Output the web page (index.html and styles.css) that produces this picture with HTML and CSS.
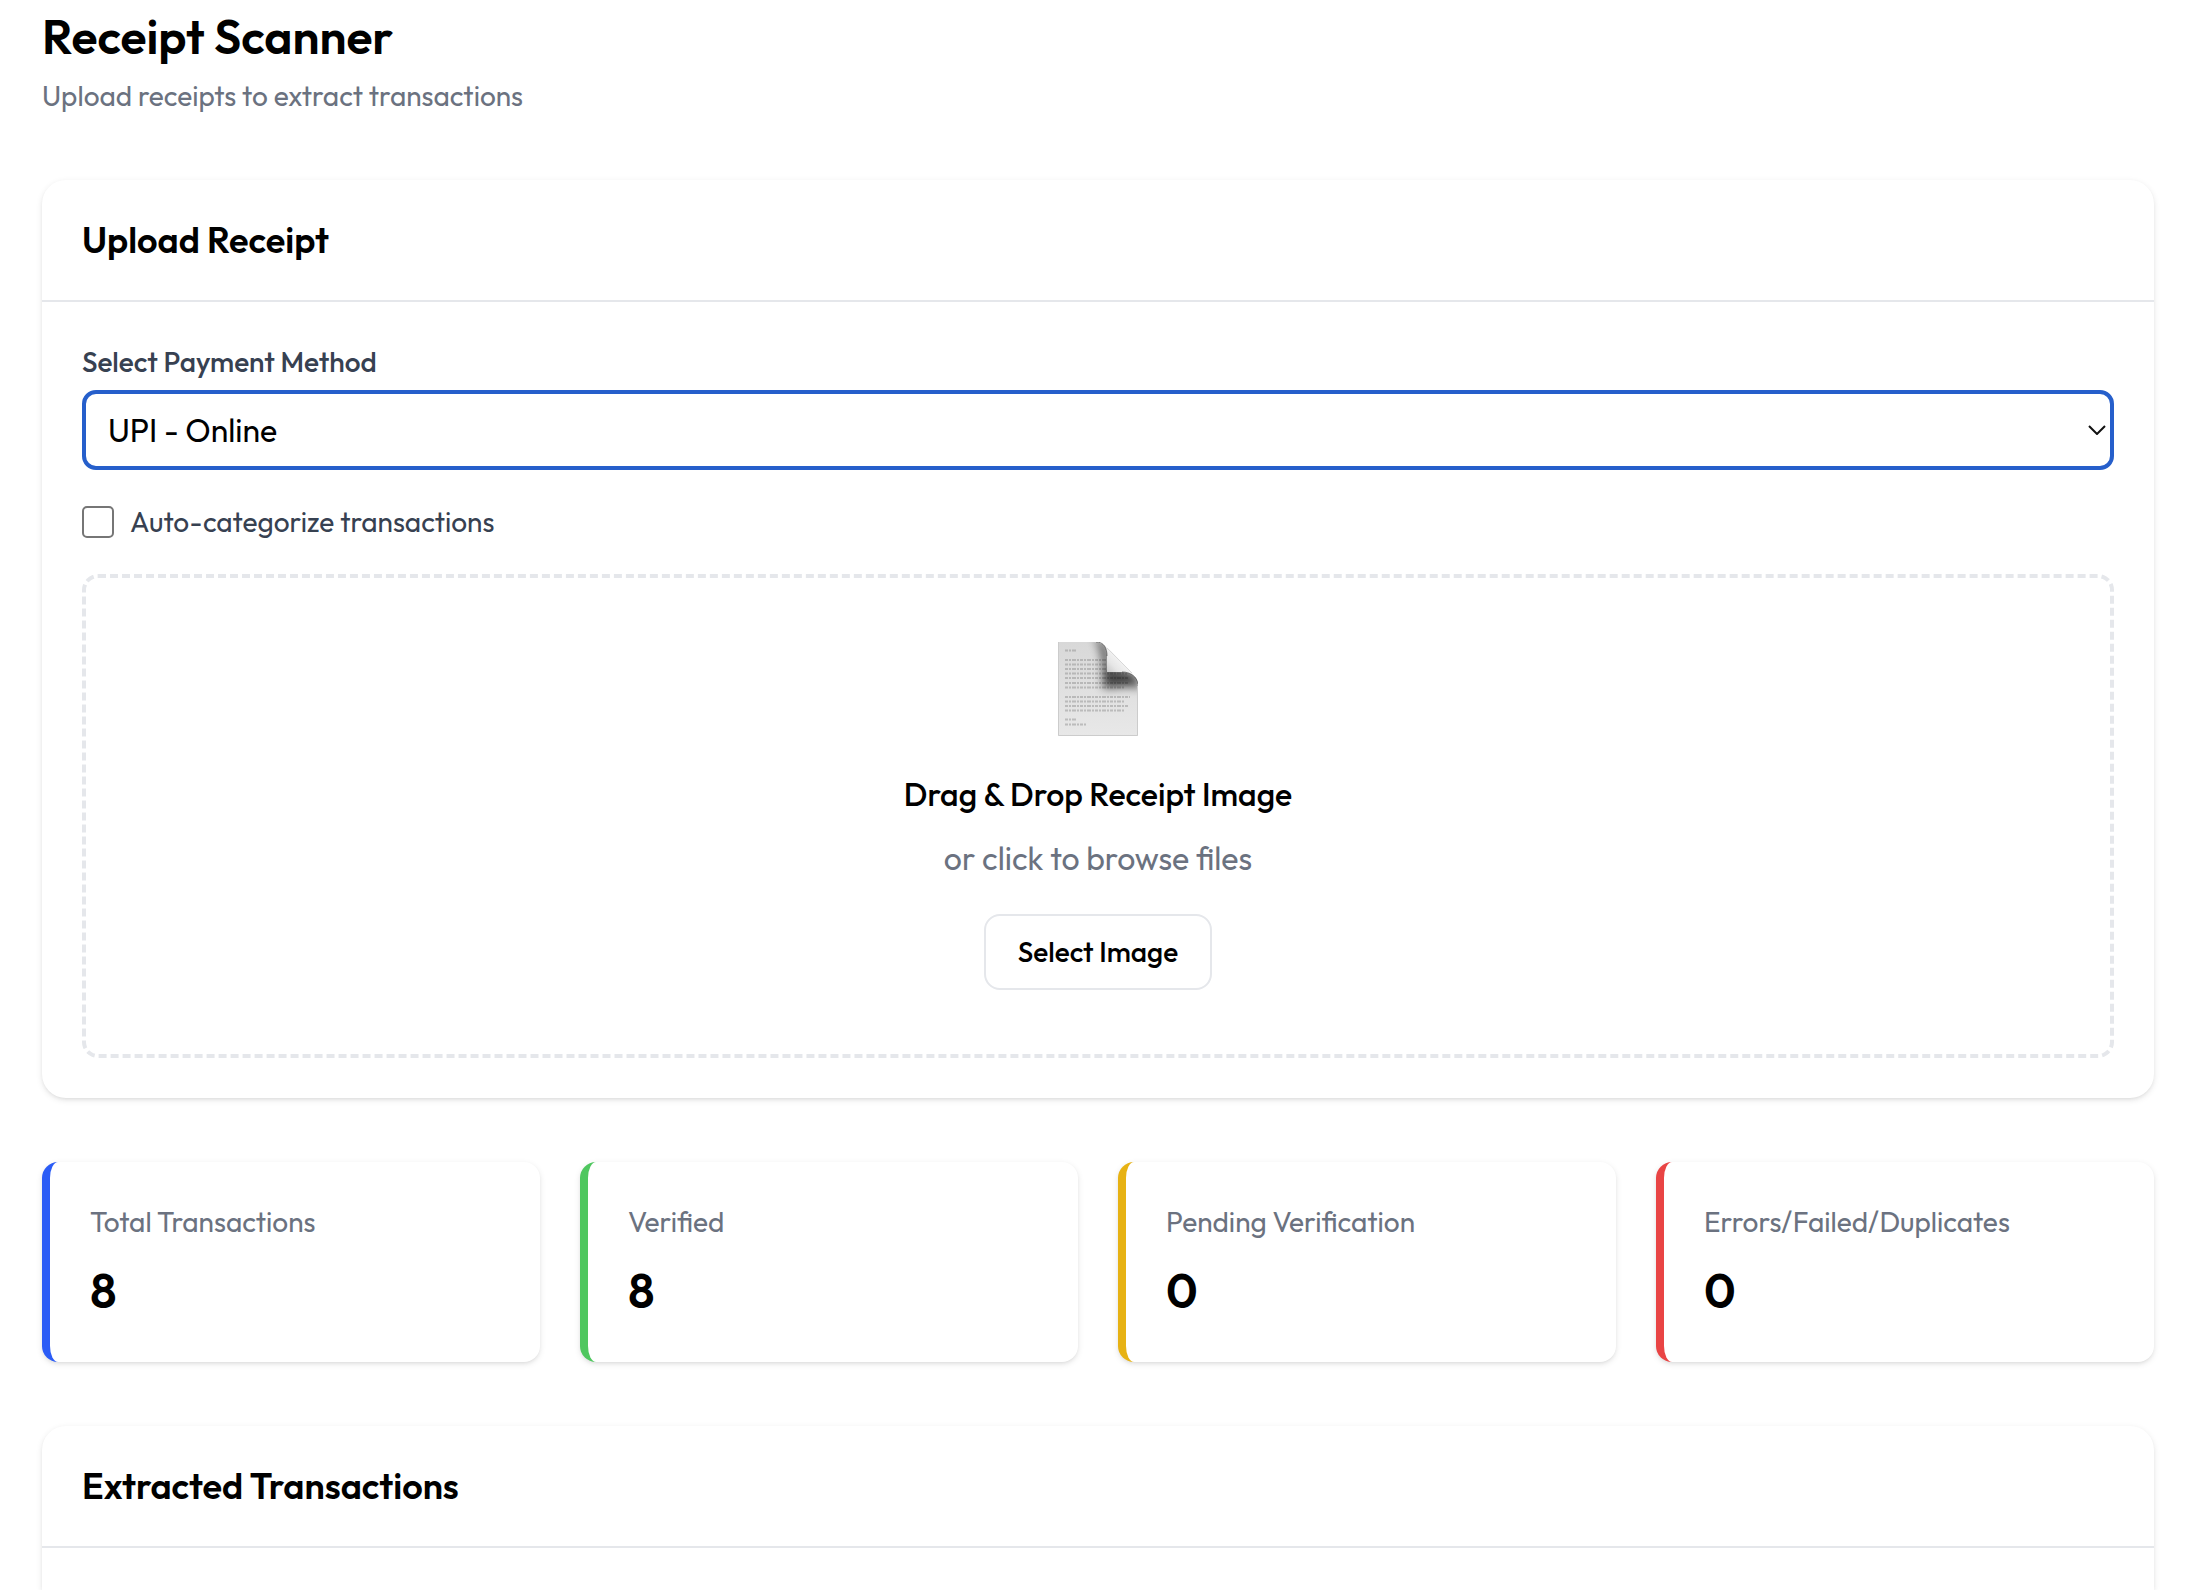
FILE: index.html
```html
<!DOCTYPE html>
<html lang="en">
<head>
<meta charset="utf-8">
<meta name="viewport" content="width=device-width, initial-scale=1">
<title>Receipt Scanner</title>
<link rel="stylesheet" href="styles.css">
</head>
<body>
<main class="page">
  <header class="page-header">
    <h1 class="page-title">Receipt Scanner</h1>
    <p class="page-subtitle">Upload receipts to extract transactions</p>
  </header>

  <section class="card">
    <div class="card-header"><h2 class="card-title">Upload Receipt</h2></div>
    <div class="card-body">
      <label class="field-label" for="method">Select Payment Method</label>
      <div class="select-wrap">
        <select class="select" id="method">
          <option>UPI - Online</option>
        </select>
        <svg class="chevron" viewBox="0 0 18 10" aria-hidden="true"><path d="M1 1l8 8 8-8" fill="none" stroke="#111" stroke-width="2"/></svg>
      </div>
      <div class="check-row">
        <input class="checkbox" type="checkbox" id="auto">
        <label class="check-label" for="auto">Auto-categorize transactions</label>
      </div>
      <div class="dropzone">
        <svg class="doc-icon" viewBox="0 0 80 96" aria-hidden="true">
          <defs>
            <linearGradient id="paper" x1="0" y1="0" x2="0" y2="1">
              <stop offset="0" stop-color="#d8d8d8"/><stop offset=".5" stop-color="#e0e0e0"/><stop offset="1" stop-color="#e8e8e8"/>
            </linearGradient>
            <linearGradient id="curl" x1="49" y1="30" x2="62" y2="18" gradientUnits="userSpaceOnUse">
              <stop offset="0" stop-color="#c8c8c8"/><stop offset=".5" stop-color="#e6e6e6"/><stop offset="1" stop-color="#f2f2f2"/>
            </linearGradient>
            <filter id="soft" x="-50%" y="-50%" width="200%" height="200%"><feGaussianBlur stdDeviation="5"/></filter>
            <clipPath id="sheet"><path d="M0 0h36C46 0 49 5 49 13v17h15c10 0 16 5 16 14v50H0z"/></clipPath>
          </defs>
          <g clip-path="url(#sheet)">
            <path d="M0 0h80v94H0z" fill="url(#paper)"/>
            <g stroke="#8a8a8a" stroke-width="2" stroke-dasharray="3 1 2 1 4 1 2 1" opacity=".45">
              <path d="M7 8.500h12M7 18h42M7 22.500h42M7 27h42M7 31.500h62M7 36h64M7 41h63M7 45.500h59M7 55h65M7 59.500h59M7 64h63M7 68.500h60M7 77.500h12M7 82.500h21"/>
            </g>
            <path d="M36 -6C49 0 52 10 51 26L76 31 84 47C72 42 60 46 45 46 46 26 46 10 36 -6z" fill="#000" opacity=".7" filter="url(#soft)"/>
            <path d="M.500 0v93.500H79.500V44" fill="none" stroke="#cccccc"/>
          </g>
          <path d="M38 0C46 0 49 6 49 14v16h15c9 0 15 5 16 12C79 37 76 33 72 29L53 9C48 4 44 1 38 0z" fill="url(#curl)"/>
          <path d="M38 0C46 0 49 6 49 14M64 30c9 0 15 5 16 12" fill="none" stroke="#333" opacity=".6"/>
          <path d="M49 6L74 31" fill="none" stroke="#d8d8d8"/>
        </svg>
        <p class="drop-title">Drag &amp; Drop Receipt Image</p>
        <p class="drop-hint">or click to browse files</p>
        <button class="button" type="button">Select Image</button>
      </div>
    </div>
  </section>

  <section class="stats">
    <div class="stat stat-total"><p class="stat-label">Total Transactions</p><p class="stat-value">8</p></div>
    <div class="stat stat-verified"><p class="stat-label">Verified</p><p class="stat-value">8</p></div>
    <div class="stat stat-pending"><p class="stat-label">Pending Verification</p><p class="stat-value">0</p></div>
    <div class="stat stat-errors"><p class="stat-label">Errors/Failed/Duplicates</p><p class="stat-value">0</p></div>
  </section>

  <section class="card card-open">
    <div class="card-header"><h2 class="card-title">Extracted Transactions</h2></div>
  </section>
</main>
</body>
</html>
```

FILE: styles.css
```css
* { box-sizing: border-box; }

body {
  margin: 0;
  background: #fff;
  color: #000;
  font-family: Outfit, Lato, sans-serif;
  font-size: 28px;
  line-height: 40px;
}

h1, h2, p { margin: 0; }

.page {
  display: flex;
  flex-direction: column;
  gap: 64px;
  min-height: 100vh;
  padding: 8px 50px 0 42px;
}

.page-title { font-size: 48px; line-height: 56px; font-weight: 600; }
.page-subtitle { margin-top: 12px; color: #6b7280; }

.card {
  border-radius: 24px;
  background: #fff;
  box-shadow: 0 2px 6px rgba(0, 0, 0, .1), 0 2px 4px -2px rgba(0, 0, 0, .1);
}
.card-open { flex: 1; border-radius: 24px 24px 0 0; }
.card-header { padding: 40px; border-bottom: 2px solid #e5e7eb; }
.card-title { font-size: 36px; line-height: 40px; font-weight: 600; }
.card-body { padding: 40px; }

.field-label { display: block; color: #374151; font-weight: 500; }

.select-wrap { display: grid; align-items: center; margin-top: 8px; }
.select {
  grid-area: 1 / 1;
  width: 100%;
  height: 80px;
  padding: 0 48px 0 22px;
  border: 4px solid #265fcb;
  border-radius: 14px;
  outline: 0;
  appearance: none;
  background: #fff;
  color: #000;
  font: inherit;
  font-size: 32px;
}
.chevron {
  grid-area: 1 / 1;
  justify-self: end;
  width: 18px;
  height: 10px;
  margin-right: 8px;
  pointer-events: none;
}

.check-row { display: flex; align-items: center; gap: 16px; margin: 32px 0; }
.checkbox {
  appearance: none;
  width: 32px;
  height: 32px;
  margin: 0;
  border: 2px solid #767676;
  border-radius: 5px;
  background: #fff;
}
.checkbox:checked { background: #265fcb; }
.check-label { color: #374151; }

.dropzone {
  display: flex;
  flex-direction: column;
  align-items: center;
  padding: 64px;
  border: 4px dashed #e5e7eb;
  border-radius: 16px;
  font-size: 32px;
  line-height: 48px;
}
.doc-icon { width: 80px; height: 96px; margin-bottom: 32px; }
.drop-title { font-weight: 500; }
.drop-hint { margin: 16px 0 32px; color: #6b7280; }

.button {
  padding: 16px 32px;
  border: 2px solid #e5e7eb;
  border-radius: 16px;
  background: #fff;
  color: #000;
  font: inherit;
  font-size: 28px;
  line-height: 40px;
  font-weight: 500;
}

.stats { display: grid; grid-template-columns: repeat(4, 1fr); gap: 40px; }
.stat {
  padding: 40px;
  border-left: 8px solid;
  border-radius: 16px;
  background: #fff;
  box-shadow: 0 2px 6px rgba(0, 0, 0, .1), 0 2px 4px -2px rgba(0, 0, 0, .1);
}
.stat-total { border-color: #2b5cf6; }
.stat-verified { border-color: #4fc75f; }
.stat-pending { border-color: #e7b214; }
.stat-errors { border-color: #e94444; }
.stat-label { color: #6b7280; }
.stat-value { margin-top: 16px; color: #000; font-size: 48px; line-height: 64px; font-weight: 600; }
```
